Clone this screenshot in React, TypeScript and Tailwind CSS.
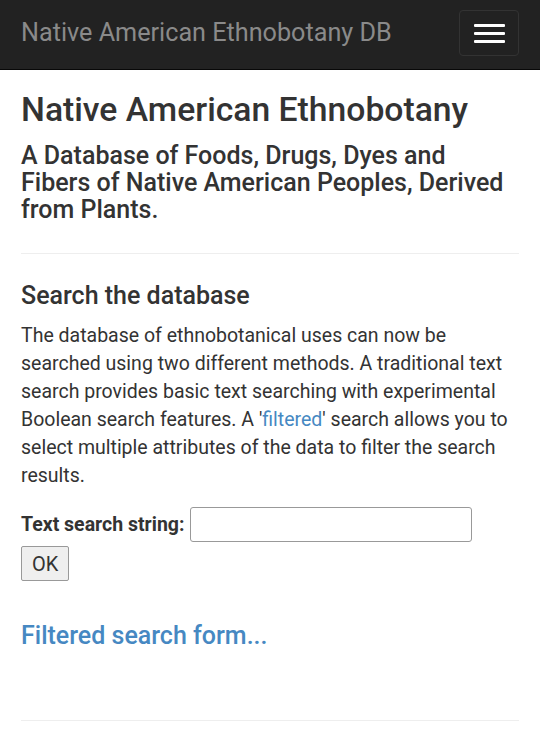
export default function App() {
  return (
    <div className="min-h-screen bg-white text-[#333]" style={{ fontFamily: 'Roboto, "Noto Sans", sans-serif' }}>
      {/* Navbar */}
      <div className="h-[70px] bg-[#222] border-b border-[#080808] flex items-center justify-between pl-[21px] pr-[21px]">
        <span className="text-[25.2px] leading-[25px] text-[#8a8a8a] pb-[5px]">Native American Ethnobotany DB</span>
        <button className="w-[60px] h-[46px] mb-[3px] rounded-[4px] border border-[#333] flex flex-col items-center justify-center gap-[5px]">
          <span className="block w-[31px] h-[3px] bg-white rounded-[1px]" />
          <span className="block w-[31px] h-[3px] bg-white rounded-[1px]" />
          <span className="block w-[31px] h-[3px] bg-white rounded-[1px]" />
        </button>
      </div>

      <div className="px-[21px]">
        <h1 className="text-[33.7px] font-medium leading-[38px] mt-[21px]">Native American Ethnobotany</h1>
        <h3 className="text-[25px] font-medium leading-[27px] mt-[13px]">
          A Database of Foods, Drugs, Dyes and Fibers of Native American Peoples, Derived from Plants.
        </h3>
        <hr className="border-t border-[#eee] mt-[30px]" />

        <h3 className="text-[25px] font-medium leading-[27px] mt-[28px]">Search the database</h3>
        <p className="text-[19.5px] leading-[28px] mt-[13px]">
          The database of ethnobotanical uses can now be searched using two different methods. A traditional text
          search provides basic text searching with experimental Boolean search features. A '
          <a className="text-[#4688c2]">filtered</a>' search allows you to select multiple attributes of the data to
          filter the search results.
        </p>
        <div className="mt-[17px] flex items-center">
          <span className="text-[19.5px] font-bold">Text search string:</span>
          <input className="ml-[6px] w-[282px] h-[35px] border border-[#999] rounded-[3px]" />
        </div>
        <button className="mt-[4px] h-[35px] px-[10px] border border-[#999] rounded-[2px] bg-[#efefef] text-[20px]">OK</button>

        <h3 className="text-[25px] font-medium leading-[27px] mt-[41px]">
          <a className="text-[#4688c2]">Filtered search form...</a>
        </h3>
        <hr className="border-t border-[#eee] mt-[71px]" />
      </div>
    </div>
  );
}
